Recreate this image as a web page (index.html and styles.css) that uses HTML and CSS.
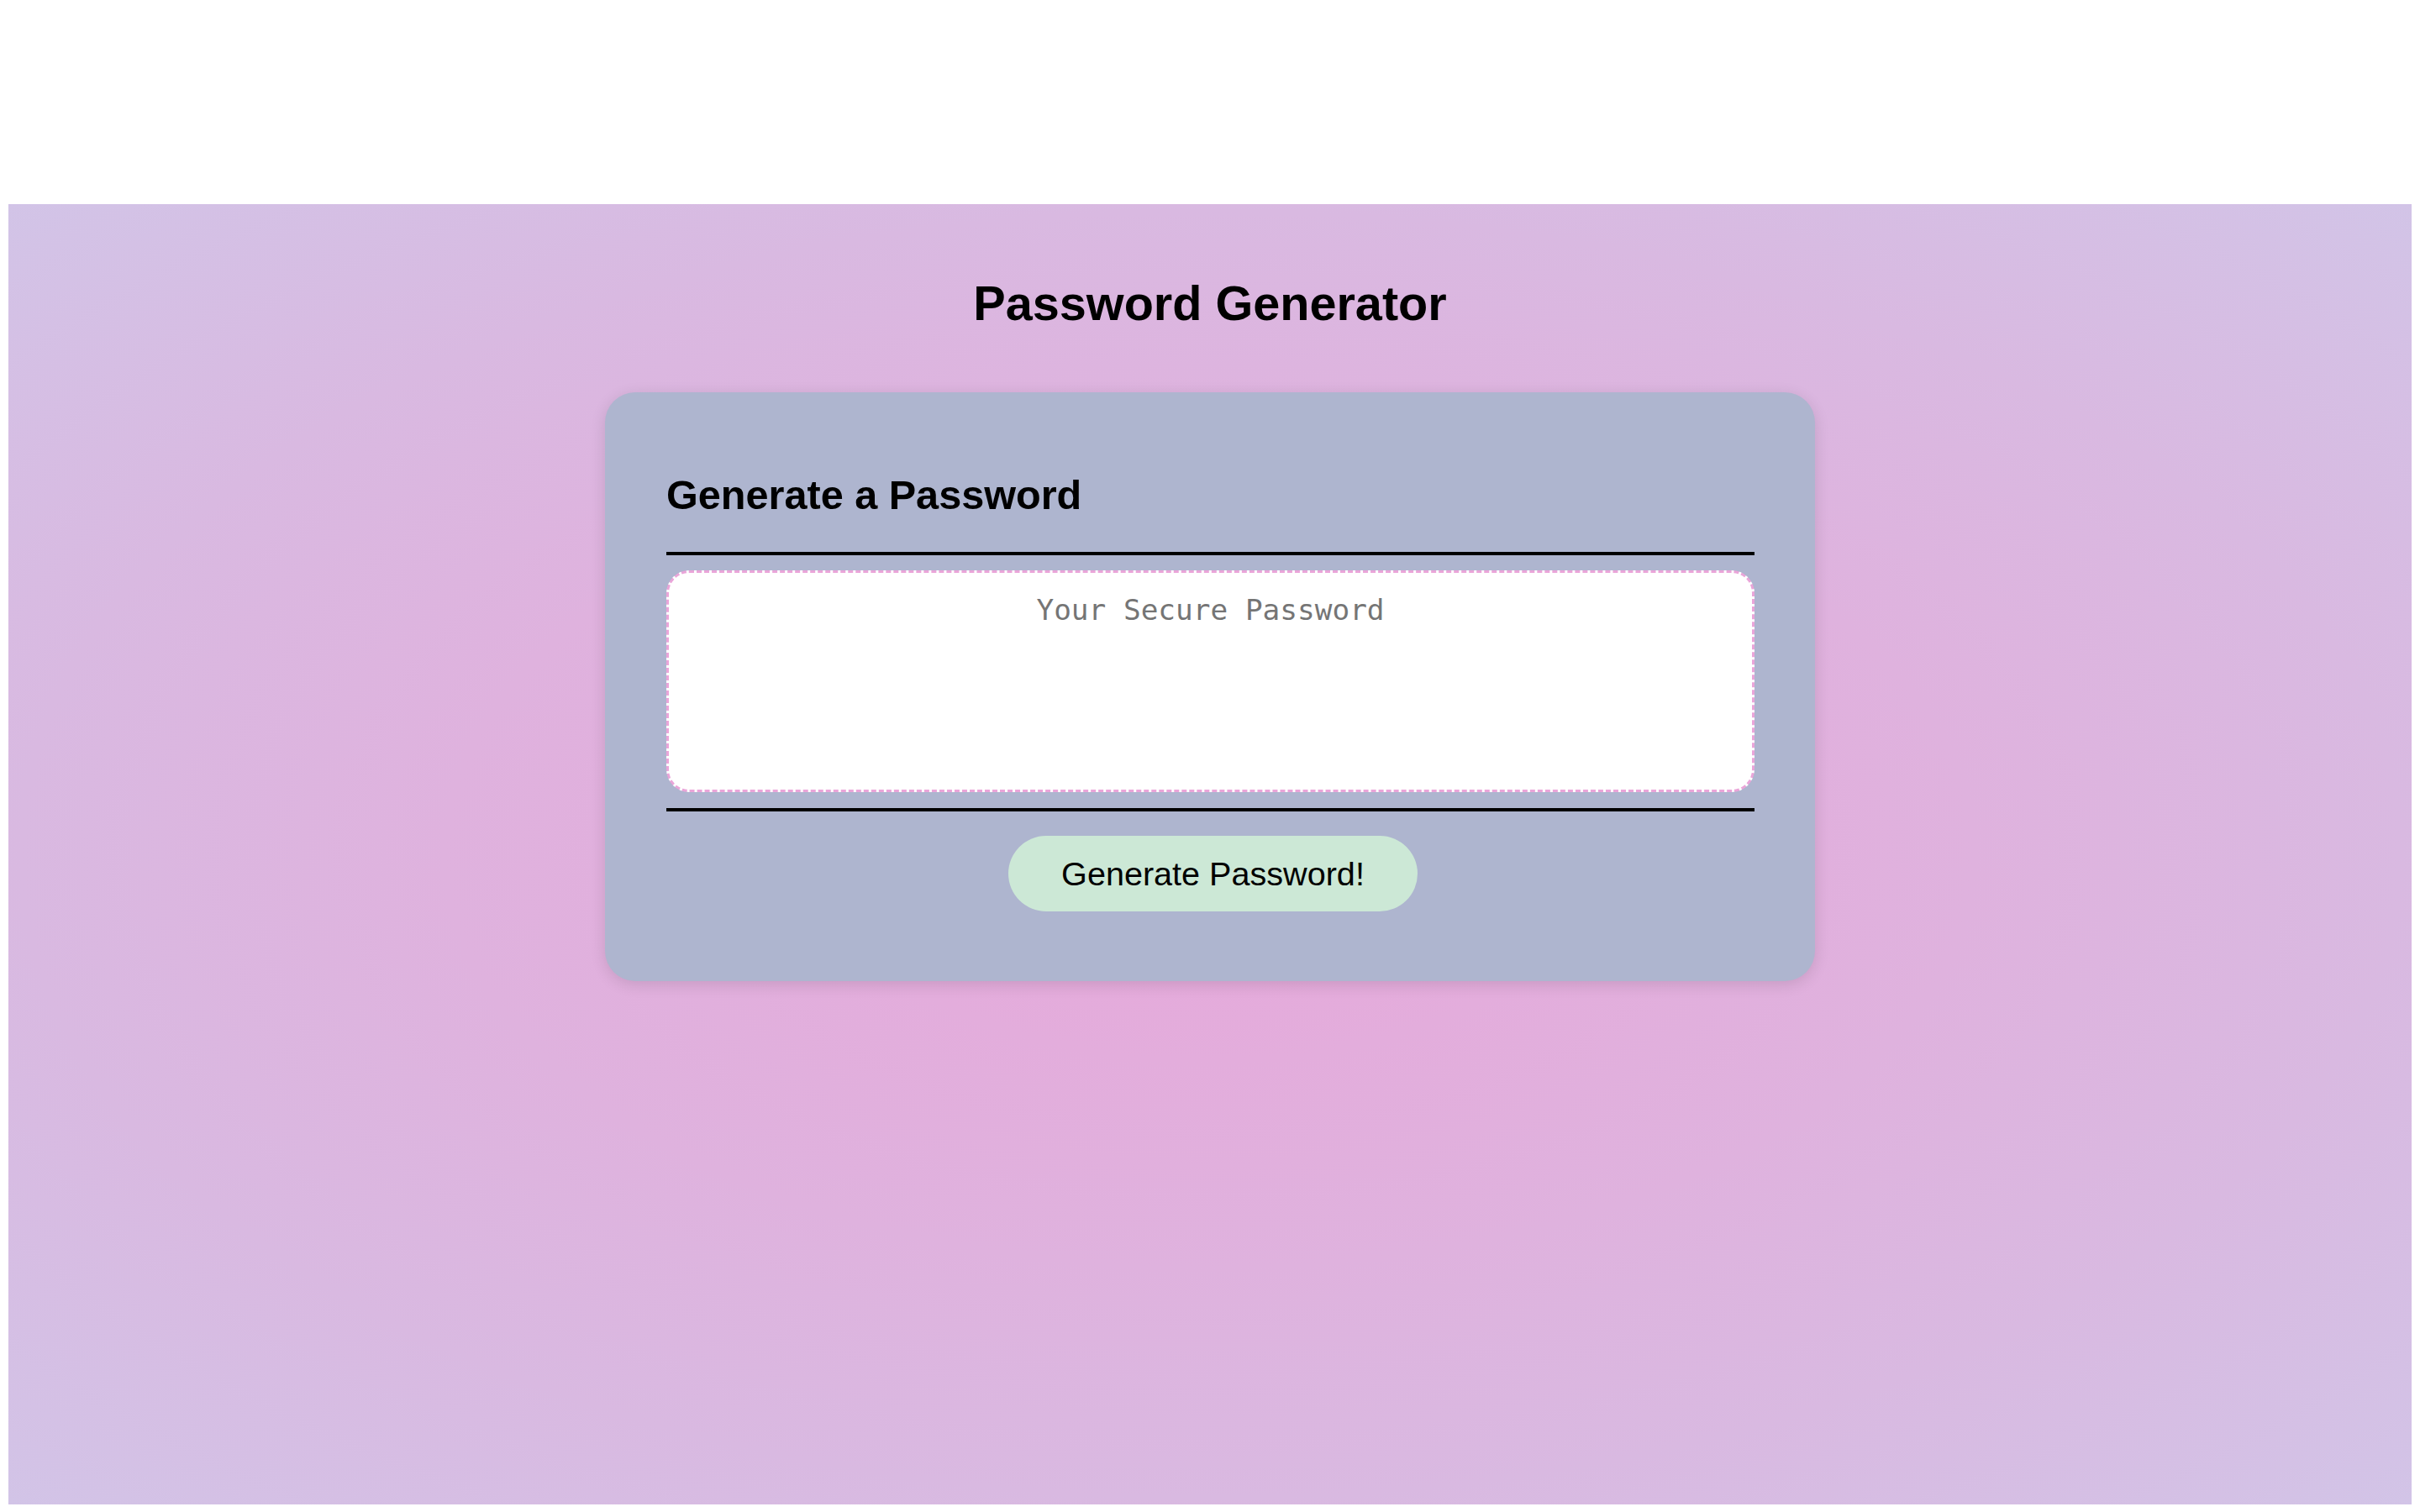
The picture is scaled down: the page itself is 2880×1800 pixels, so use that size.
FILE: index.html
```html
<!DOCTYPE html>
<html lang="en">
<head>
<meta charset="UTF-8">
<title>Password Generator</title>
<link rel="stylesheet" href="styles.css">
</head>
<body>
  <header class="top-space"></header>
  <main class="wrapper">
    <h1 class="page-title">Password Generator</h1>
    <section class="card">
      <h2 class="card-title">Generate a Password</h2>
      <div class="rule"></div>
      <textarea class="password-box" readonly placeholder="Your Secure Password" aria-label="Generated Password"></textarea>
      <div class="rule rule-bottom"></div>
      <div class="actions">
        <button class="btn" type="button">Generate Password!</button>
      </div>
    </section>
  </main>
</body>
</html>
```

FILE: styles.css
```css
html, body {
  margin: 0;
  padding: 0;
  background: #ffffff;
}

body {
  font-family: "Liberation Sans", Arial, Helvetica, sans-serif;
  color: #000;
  height: 1800px;
  display: flex;
  flex-direction: column;
  box-sizing: border-box;
  padding: 0 10px 9px 10px;
}

.top-space {
  height: 243px;
  flex: none;
}

.wrapper {
  flex: 1;
  display: flex;
  flex-direction: column;
  align-items: center;
  padding-top: 85px;
  background: radial-gradient(ellipse at 50% 50%, #e7a8da 0%, #dfb2de 45%, #d9b9e1 70%, #d2c4e7 100%);
}

.page-title {
  margin: 0;
  font-size: 57.6px;
  font-weight: bold;
  line-height: normal;
}

.card {
  margin-top: 73px;
  width: 1440px;
  box-sizing: border-box;
  padding: 94px 72px 83px 73px;
  background: #aeb5cf;
  border-radius: 36px;
  box-shadow: 0 4px 18px rgba(0, 0, 0, 0.12);
  display: flex;
  flex-direction: column;
}

.card-title {
  margin: 0;
  font-size: 48.6px;
  font-weight: bold;
  line-height: normal;
}

.rule {
  height: 4px;
  background: #000;
  margin-top: 40px;
}

.password-box {
  display: block;
  margin-top: 18px;
  width: 100%;
  height: 264px;
  box-sizing: border-box;
  padding: 24px 20px;
  border: 3px dashed #eaa5d9;
  border-radius: 27px;
  background: #ffffff;
  font-family: "DejaVu Sans Mono", "Liberation Mono", monospace;
  font-size: 34.4px;
  line-height: normal;
  text-align: center;
  resize: none;
  outline: none;
  color: #333;
}

.password-box::placeholder {
  color: #757575;
}

.rule-bottom {
  margin-top: 19px;
}

.actions {
  margin-top: 29px;
  display: flex;
  justify-content: center;
}

.btn {
  height: 90px;
  padding: 0 63px;
  margin-left: 6px;
  border: none;
  border-radius: 45px;
  background: #cce8d6;
  color: #000;
  font-family: "Liberation Sans", Arial, Helvetica, sans-serif;
  font-size: 39.6px;
  line-height: normal;
  cursor: pointer;
}
```
